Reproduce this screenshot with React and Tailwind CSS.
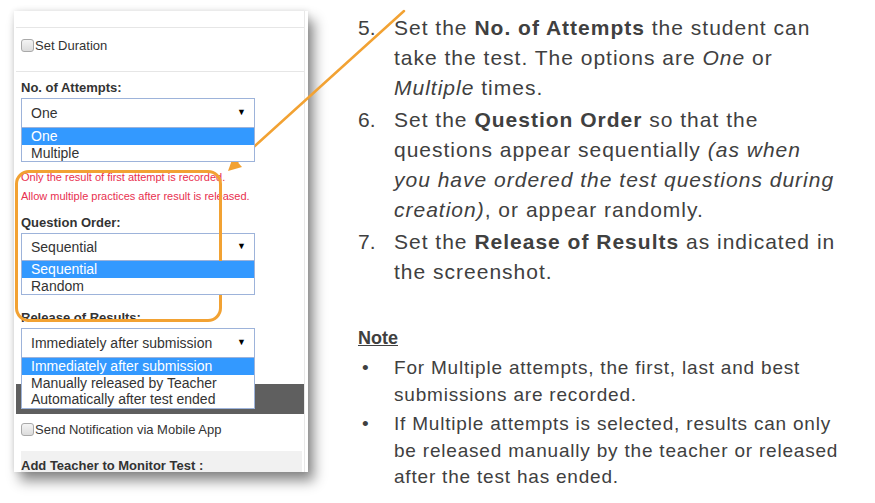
import React from 'react';

const sans = { fontFamily: '"Liberation Sans", Arial, sans-serif' };

const Checkbox = () => (
  <span className="inline-block w-[13px] h-[13px] rounded-[3px] border border-[#a9a9a9] bg-gradient-to-b from-[#f4f4f4] to-[#dcdcdc] mr-[1px]" />
);

const Select = ({ value, options, selected, h = 'h-[30px]' }) => (
  <div className="relative w-[234px]">
    <div className={`${h} border border-[#9db3da] bg-white flex items-center justify-between pl-[9px] pr-[8px] text-[14px] text-[#333]`}>
      <span>{value}</span>
      <span className="text-[9px] text-black">▼</span>
    </div>
    <div className="absolute left-0 top-full w-full z-10 bg-white border border-[#9db3da] border-t-0 text-[14px] leading-[16.5px]">
      {options.map((o) => (
        <div
          key={o}
          className={`pl-[9px] ${o === selected ? 'bg-[#3399ff] text-white' : 'text-[#333]'}`}
        >
          {o}
        </div>
      ))}
    </div>
  </div>
);

const Step = ({ n, children }) => (
  <div className="flex">
    <span className="w-[36px] shrink-0 tracking-normal">{n}.</span>
    <div>{children}</div>
  </div>
);

const Bullet = ({ children }) => (
  <div className="flex">
    <span className="w-[36px] shrink-0 pl-[4px] tracking-normal">•</span>
    <div>{children}</div>
  </div>
);

export default function App() {
  return (
    <div className="relative w-[875px] h-[503px] bg-white overflow-hidden flex" style={sans}>
      {/* Screenshot panel */}
      <div className="pl-[14px] pt-[11px]">
        <div className="relative w-[294px] h-[461px] bg-white overflow-hidden shadow-[6px_9px_12px_rgba(0,0,0,0.45),0_0_6px_rgba(0,0,0,0.12)]">
          <div className="h-full mr-[3px] border-r border-[#e8e8e8] pl-[2px] flex flex-col">
            <div className="h-[17px] shrink-0 border-b border-[#e6e6e6]" />
            <div className="h-[44px] shrink-0 border-b border-[#e6e6e6] flex items-start pt-[8px] pl-[5px] text-[13px] text-[#333]">
              <label className="flex items-center">
                <Checkbox />
                Set Duration
              </label>
            </div>

            <div className="pl-[5px] pt-[8px] text-[#333]">
              <div className="text-[13px] font-bold leading-[15px]">No. of Attempts:</div>
              <div className="mt-[3px]">
                <Select value="One" options={['One', 'Multiple']} selected="One" />
              </div>
              <div className="mt-[40px] text-[11px] leading-[19px] text-[#e8304f]">
                <div>Only the result of first attempt is recorded.</div>
                <div>Allow multiple practices after result is released.</div>
              </div>
              <div className="mt-[9px] text-[13px] font-bold leading-[15px]">Question Order:</div>
              <div className="mt-[3px]">
                <Select value="Sequential" options={['Sequential', 'Random']} selected="Sequential" h="h-[28px]" />
              </div>
              <div className="mt-[49px] text-[13px] font-bold leading-[15px]">Release of Results:</div>
              <div className="mt-[3px]">
                <Select
                  value="Immediately after submission"
                  options={['Immediately after submission', 'Manually released by Teacher', 'Automatically after test ended']}
                  selected="Immediately after submission"
                />
              </div>
            </div>

            <div className="mt-[26px] h-[30px] shrink-0 bg-[#5f5f5f]" />

            <div className="pl-[5px] pt-[6px] h-[37px] shrink-0 text-[13px] text-[#333]">
              <label className="flex items-center">
                <Checkbox />
                Send Notification via Mobile App
              </label>
            </div>
            <div className="ml-[5px] mr-[2px] flex-1 bg-[#f1f1f1] pt-[7px] text-[13px] leading-[15px] font-bold text-[#333]">
              Add Teacher to Monitor Test :
            </div>
          </div>

          {/* Orange highlight box */}
          <div className="absolute left-[1px] top-[159px] w-[207px] h-[152px] rounded-[14px] border-[3px] border-[#f2a233] pointer-events-none" />
        </div>
      </div>

      {/* Instructions */}
      <div className="ml-[50px] pt-[13px] text-[#404040]">
        <div className="text-[21px] leading-[30px] tracking-[1px] flex flex-col gap-[2px]">
          <Step n={5}>
            Set the <b>No. of Attempts</b> the student can<br />
            take the test. The options are <i>One</i> or<br />
            <i>Multiple</i> times.
          </Step>
          <Step n={6}>
            Set the <b>Question Order</b> so that the<br />
            questions appear sequentially <i>(as when<br />
            you have ordered the test questions during<br />
            creation)</i>, or appear randomly.
          </Step>
          <Step n={7}>
            Set the <b>Release of Results</b> as indicated in<br />
            the screenshot.
          </Step>
        </div>

        <div className="mt-[40px] text-[18px] font-bold underline leading-[22px]">Note</div>
        <div className="mt-[6px] text-[19px] leading-[26.5px] tracking-[0.8px] flex flex-col gap-[3px]">
          <Bullet>
            For Multiple attempts, the first, last and best<br />
            submissions are recorded.
          </Bullet>
          <Bullet>
            If Multiple attempts is selected, results can only<br />
            be released manually by the teacher or released<br />
            after the test has ended.
          </Bullet>
        </div>
      </div>

      {/* Arrow */}
      <svg className="absolute left-0 top-0 pointer-events-none" width="875" height="503">
        <line x1="404" y1="11" x2="236" y2="163" stroke="#f2a233" strokeWidth="2.5" strokeLinecap="round" />
        <polygon points="228,171 233,157 242,167" fill="#f2a233" />
      </svg>
    </div>
  );
}
